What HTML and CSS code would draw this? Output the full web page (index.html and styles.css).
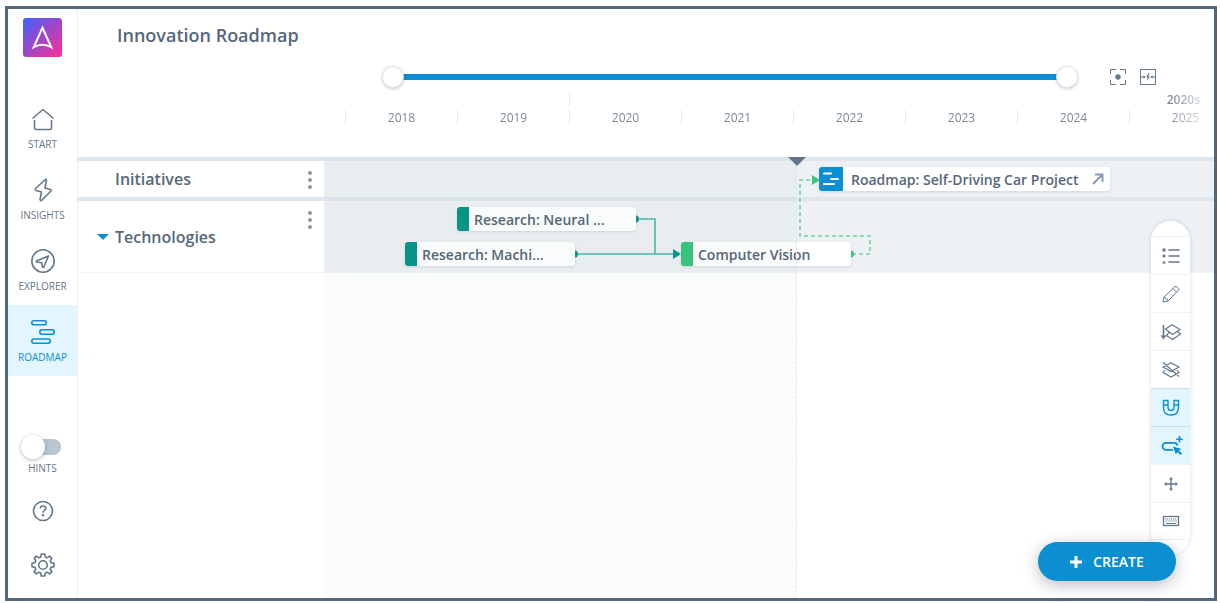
FILE: index.html
```html
<!DOCTYPE html>
<html lang="en">
<head>
    <meta charset="UTF-8">
    <meta name="viewport" content="width=device-width, initial-scale=1.0">
    <title>Innovation Roadmap</title>
    <link rel="stylesheet" href="styles.css">
</head>
<body>
    <div class="app">
        <nav class="sidebar">
            <a class="logo" href="#" aria-label="Home">
                <svg viewBox="0 0 40 40" width="39" height="39">
                    <path d="M20 10 L29 30 Q20 25 11 30 Z" fill="none" stroke="#fff" stroke-width="2" stroke-linejoin="miter"/>
                </svg>
            </a>
            <a class="nav-item" href="#">
                <svg viewBox="0 0 24 24" width="24" height="24">
                    <path d="M1.500 11.500 L12 2.500 L22.500 11.500 M3.500 13 V21 Q3.500 22.500 5 22.500 H19 Q20.500 22.500 20.500 21 V13"/>
                </svg>
                <span>START</span>
            </a>
            <a class="nav-item" href="#">
                <svg viewBox="0 0 24 24" width="24" height="24">
                    <path d="M15 1 L4.500 10.500 Q4 12 5 12.500 L10.500 14 L9 21.500 Q9.500 23 10.500 22.500 L20 13 Q20.500 12 19.500 11.500 L14 10 L15.500 2 Z"/>
                </svg>
                <span>INSIGHTS</span>
            </a>
            <a class="nav-item" href="#">
                <svg viewBox="0 0 24 24" width="24" height="24">
                    <circle cx="12" cy="12" r="11.200"/>
                    <path d="M17.500 7 L5.500 12 Q5 13 6 13.300 L10.500 13.500 L11.500 18 Q12 19 12.800 18 Z"/>
                </svg>
                <span>EXPLORER</span>
            </a>
            <a class="nav-item active" href="#">
                <svg viewBox="0 0 24 24" width="24" height="24">
                    <rect x="0.800" y="0.800" width="14.500" height="4" rx="2"/>
                    <rect x="8.800" y="9.700" width="14.400" height="4.600" rx="2.300"/>
                    <rect x="0.800" y="19" width="18.500" height="4.200" rx="2.100"/>
                </svg>
                <span>ROADMAP</span>
            </a>
            <div class="nav-bottom">
                <label class="hints">
                    <input type="checkbox" class="switch">
                    <span>HINTS</span>
                </label>
                <button class="icon-button" aria-label="Help">
                    <svg viewBox="0 0 24 24" width="24" height="24">
                        <circle cx="12" cy="12" r="9.500"/>
                        <path d="M9.300 9.600 Q9.300 7 12 7 Q14.800 7 14.800 9.300 Q14.800 10.700 13.200 11.600 Q12 12.300 12 13.800"/>
                        <circle cx="12" cy="16.300" r="0.500"/>
                    </svg>
                </button>
                <button class="icon-button" aria-label="Settings">
                    <svg viewBox="0 0 24 24" width="24" height="24">
                        <circle cx="12" cy="12" r="4.300"/>
                        <path d="M10.300 1 H13.700 L14.400 4 L16.200 4.800 L18.700 3.100 L20.900 5.300 L19.200 7.800 L20 9.600 L23 10.300 V13.700 L20 14.400 L19.200 16.200 L20.900 18.700 L18.700 20.900 L16.200 19.200 L14.400 20 L13.700 23 H10.300 L9.600 20 L7.800 19.200 L5.300 20.900 L3.100 18.700 L4.800 16.200 L4 14.400 L1 13.700 V10.300 L4 9.600 L4.800 7.800 L3.100 5.300 L5.300 3.100 L7.800 4.800 L9.600 4 Z"/>
                    </svg>
                </button>
            </div>
        </nav>

        <main class="content">
            <header class="header">
                <h1>Innovation Roadmap</h1>
                <div class="range-row">
                    <div class="range">
                        <input type="range" min="0" max="100" value="0" aria-label="From">
                        <input type="range" min="0" max="100" value="100" aria-label="To">
                    </div>
                    <button class="range-button" aria-label="Fit to screen">
                        <svg viewBox="0 0 16 16" width="16" height="16">
                            <path d="M0.500 5 V0.500 H6 M10 0.500 H15.500 V5 M15.500 11 V15.500 H10 M6 15.500 H0.500 V11"/>
                            <circle cx="8" cy="8" r="2.700" fill="currentColor" stroke="none"/>
                        </svg>
                    </button>
                    <button class="range-button" aria-label="Go to today">
                        <svg viewBox="0 0 16 16" width="16" height="16">
                            <rect x="0.500" y="0.500" width="15" height="15"/>
                            <path d="M1 8 H4 M12 8 H15"/>
                            <path d="M3.500 6.300 L5.700 8 L3.500 9.700 Z M12.500 6.300 L10.300 8 L12.500 9.700 Z M8.500 4 L6.200 8.300 H7.600 L7.200 12 L9.800 7.400 H8.400 L9.500 4 Z" fill="currentColor" stroke="none"/>
                        </svg>
                    </button>
                </div>
                <div class="scale">
                    <div class="decades">
                        <span class="decade">2020s</span>
                    </div>
                    <div class="years">
                        <span>2018</span>
                        <span>2019</span>
                        <span>2020</span>
                        <span>2021</span>
                        <span>2022</span>
                        <span>2023</span>
                        <span>2024</span>
                        <span>2025</span>
                    </div>
                </div>
            </header>

            <section class="board">
                <div class="lane">
                    <div class="lane-label">
                        <h2>Initiatives</h2>
                        <button class="more" aria-label="Initiatives menu"><i></i><i></i><i></i></button>
                    </div>
                    <div class="track">
                        <a class="bar link" href="#" style="left: 495px; width: 291px">
                            <svg class="bar-icon" viewBox="0 0 24 24" width="24" height="24">
                                <path d="M5 6.500 H12 M12 12 H19 M5 17 H15"/>
                            </svg>
                            <span>Roadmap: Self-Driving Car Project</span>
                            <svg class="open" viewBox="0 0 12 12" width="12" height="12">
                                <path d="M1 11 L10 2 M3 1.500 H10.500 V9"/>
                            </svg>
                        </a>
                    </div>
                </div>
                <div class="lane tall">
                    <div class="lane-label">
                        <button class="toggle" aria-label="Collapse Technologies"></button>
                        <h2>Technologies</h2>
                        <button class="more" aria-label="Technologies menu"><i></i><i></i><i></i></button>
                    </div>
                    <div class="track">
                        <div class="bar research" style="left: 133px; width: 179px"><span>Research: Neural ...</span></div>
                        <div class="bar research second" style="left: 81px; width: 170px"><span>Research: Machi...</span></div>
                        <div class="bar tech second" style="left: 357px; width: 170px"><span>Computer Vision</span></div>
                    </div>
                </div>
                <div class="rest"></div>
                <div class="past"></div>
                <div class="now"></div>
                <svg class="links" viewBox="0 0 890 120" width="890" height="120">
                    <g stroke="#4db3a7" stroke-width="1.600" fill="none">
                        <path d="M313 62 H331 V97 M252 97 H350"/>
                    </g>
                    <g fill="#0a9688">
                        <path d="M312 58.500 a3 3.500 0 0 1 0 7 Z M251 93.500 a3 3.500 0 0 1 0 7 Z M349 92 L357 97 L349 102 Z"/>
                    </g>
                    <path d="M528 97 H546 V79 H476 V23 H488" stroke="#6fd29c" stroke-width="1.600" fill="none" stroke-dasharray="4 3"/>
                    <path d="M527 93.500 a3 3.500 0 0 1 0 7 Z M488 18 L496 23 L488 28 Z" fill="#3ac47d"/>
                </svg>
            </section>

            <div class="toolbar">
                <button aria-label="Legend">
                    <svg viewBox="0 0 20 20" width="20" height="20">
                        <path d="M7.500 4 H18.500 M7.500 10 H18.500 M7.500 16 H18.500" stroke-width="1.700"/>
                        <path d="M1.500 2.500 h3 v3 h-3 Z M3 8.500 a1.500 1.500 0 1 1 0 3 a1.500 1.500 0 1 1 0 -3 Z M3 14.500 L4.800 17.500 H1.200 Z" fill="currentColor" stroke="none"/>
                    </svg>
                </button>
                <button aria-label="Edit">
                    <svg viewBox="0 0 20 20" width="20" height="20">
                        <path d="M2 18 L3 13 L14 2.600 Q15 1.800 16 2.800 L17.500 4.300 Q18.400 5.300 17.500 6.200 L7 17 Z M12 4.500 L15.500 8.200 M3 13 Q5 13 5 15 Q7 15 7 17"/>
                    </svg>
                </button>
                <button aria-label="Sort layers">
                    <svg viewBox="0 0 20 20" width="20" height="20">
                        <path d="M2.500 3 V14" stroke-width="1.600"/>
                        <path d="M-0.500 13.500 H5.500 L2.500 17.500 Z" fill="currentColor" stroke="none"/>
                        <path d="M4.500 7 L11 2.800 L19 7.500 L11.500 12.500 Z M16.500 9.500 L19.500 12 L11.500 17.500 L5.500 13.500 L8 10.500" stroke-width="1.200"/>
                    </svg>
                </button>
                <button aria-label="Hide layers">
                    <svg viewBox="0 0 20 20" width="20" height="20">
                        <path d="M2 7 L10 3 L18 7 L10 11.500 Z M4 10 L2 12.500 L10 17 L18 12.500 L16 10 M2 2.500 L18 16.500" stroke-width="1.200"/>
                    </svg>
                </button>
                <button class="on" aria-label="Snap">
                    <svg viewBox="0 0 20 20" width="20" height="20">
                        <path d="M2.500 2.500 H7 V9 Q7 12.500 10 12.500 Q13 12.500 13 9 V2.500 H17.500 V9.500 Q17.500 17 10 17 Q2.500 17 2.500 9.500 Z M2.500 7 H7 M13 7 H17.500" stroke-width="1.400"/>
                    </svg>
                </button>
                <button class="on" aria-label="Quick add">
                    <svg viewBox="0 0 20 20" width="20" height="20">
                        <path d="M12 13.800 H5 a3.500 3.500 0 0 1 0 -7 H13 Q16 6.800 16.500 9.500" stroke-width="1.800"/>
                        <path d="M18.500 0 V6.500 M15.300 3.200 H21.700" stroke-width="1.600"/>
                        <path d="M12 10.500 L20.500 13 L17.800 14.500 L21 17.500 L19.500 19 L16.500 16 L14.800 18.500 Z" fill="currentColor" stroke="none"/>
                    </svg>
                </button>
                <button aria-label="Move">
                    <svg viewBox="0 0 20 20" width="20" height="20">
                        <path d="M10 4 V16 M4 10 H16" stroke-width="1.400"/>
                        <path d="M10 3 L12 5.500 H8 Z M10 17 L12 14.500 H8 Z M3 10 L5.500 8 V12 Z M17 10 L14.500 8 V12 Z" fill="currentColor" stroke="none"/>
                    </svg>
                </button>
                <button aria-label="Keyboard shortcuts">
                    <svg viewBox="0 0 20 20" width="20" height="20">
                        <rect x="2.500" y="5.500" width="15" height="9" stroke-width="1.300"/>
                        <path d="M4 8 H16 M4.500 10 H16" stroke-dasharray="1.200 0.800"/>
                        <path d="M5 12.500 H15"/>
                    </svg>
                </button>
            </div>

            <button class="create">
                <svg viewBox="0 0 12 12" width="12" height="12">
                    <path d="M6 0 V12 M0 6 H12"/>
                </svg>
                CREATE
            </button>
        </main>
    </div>
</body>
</html>
```
FILE: styles.css
```css
* {
    box-sizing: border-box;
}
body {
    margin: 0;
    padding: 6px 3px 2px 5px;
    height: 100vh;
    font-family: "Open Sans", "Noto Sans", sans-serif;
    color: #56677a;
    background: #fff;
}
.app {
    display: flex;
    height: 100%;
    border: 3px solid #54687a;
}
button {
    padding: 0;
    border: none;
    background: none;
    color: inherit;
    font: inherit;
    cursor: pointer;
}
a {
    color: inherit;
    text-decoration: none;
}
svg {
    display: block;
    fill: none;
    stroke: currentColor;
    overflow: visible;
}
h1, h2 {
    margin: 0;
    font-weight: 550;
}

/* Sidebar */
.sidebar {
    display: flex;
    flex-direction: column;
    align-items: center;
    flex: none;
    width: 70px;
    border-right: 1px solid #eef1f3;
    color: #64788c;
}
.logo {
    margin: 9px 0 35px;
    border-radius: 3px;
    background: linear-gradient(135deg, #3d63ff 0%, #a146c8 50%, #ff2e93 100%);
}
.nav-item {
    display: flex;
    flex-direction: column;
    align-items: center;
    gap: 5px;
    width: 100%;
    height: 71px;
    padding-top: 15px;
    font-size: 10px;
    font-weight: 500;
    line-height: 16px;
}
.nav-item svg,
.icon-button svg {
    stroke-width: 1.6;
    stroke-linejoin: round;
}
.nav-item.active {
    background: #e3f5ff;
    color: #0b8fd2;
}
.nav-bottom {
    display: flex;
    flex-direction: column;
    align-items: center;
    gap: 22px;
    margin-top: auto;
    padding-bottom: 17px;
}
.hints {
    display: flex;
    flex-direction: column;
    align-items: center;
    gap: 5px;
    margin-bottom: -3px;
    font-size: 10px;
    font-weight: 500;
    line-height: 16px;
}
.switch {
    appearance: none;
    position: relative;
    width: 36px;
    height: 16px;
    margin: 0;
    border-radius: 8px;
    background: #b9c6d2;
}
.switch::before {
    content: '';
    position: absolute;
    top: -4px;
    left: -4px;
    width: 24px;
    height: 24px;
    border-radius: 50%;
    background: #fff;
    box-shadow: 0 1px 4px rgba(60, 80, 110, 0.4);
}
.icon-button {
    padding: 4px;
}

/* Header */
.content {
    position: relative;
    display: flex;
    flex-direction: column;
    flex: 1;
    min-width: 0;
}
.header {
    height: 148px;
    padding-top: 14px;
    overflow: hidden;
}
.header h1 {
    padding-left: 39px;
    font-size: 18px;
    line-height: 24px;
}
.range-row {
    display: flex;
    align-items: center;
    gap: 14px;
    margin-top: 18px;
    padding: 0 58px 0 304px;
    height: 24px;
}
.range {
    display: grid;
    align-items: center;
    flex: 1;
    margin-right: 18px;
    background: linear-gradient(#0b8fd2, #0b8fd2) center / calc(100% - 22px) 6px no-repeat;
}
.range input {
    grid-area: 1 / 1;
    appearance: none;
    width: 100%;
    height: 22px;
    margin: 0;
    background: none;
    pointer-events: none;
}
.range input::-webkit-slider-thumb {
    appearance: none;
    width: 22px;
    height: 22px;
    border: 1px solid #e2e6ee;
    border-radius: 50%;
    background: #fff;
    box-shadow: 0 1px 3px rgba(60, 80, 120, 0.3);
    pointer-events: auto;
}
.range-button {
    color: #64788c;
}
.scale {
    padding-left: 267px;
    font-size: 12px;
    color: #7c8b98;
    mask-image: linear-gradient(to right, #000 calc(100% - 45px), transparent);
}
.decades,
.years {
    display: grid;
    grid-template-columns: repeat(8, 112px);
}
.decades {
    height: 14px;
    margin: 4px 0 3px;
    line-height: 14px;
}
.decade {
    grid-column: 3 / -1;
    padding-right: 41px;
    border-left: 1px solid #e9edf0;
    font-weight: 600;
    text-align: right;
}
.years span {
    border-left: 1px solid #e9edf0;
    line-height: 15px;
    text-align: center;
}

/* Board */
.board {
    position: relative;
    display: flex;
    flex-direction: column;
    flex: 1;
    overflow: hidden;
}
.lane {
    display: flex;
    height: 40px;
    border-top: 4px solid #dfe6ed;
}
.lane.tall {
    height: 76px;
    border-bottom: 1px solid #f0f3f5;
}
.lane-label {
    display: flex;
    align-items: center;
    position: relative;
    flex: none;
    width: 246px;
    padding-left: 37px;
}
.lane-label h2 {
    font-size: 16px;
    line-height: 20px;
}
.toggle {
    position: absolute;
    left: 19px;
    border: 6px solid transparent;
    border-top-color: #0b8fd2;
    border-bottom: none;
}
.more {
    display: flex;
    flex-direction: column;
    align-self: flex-start;
    gap: 3px;
    margin: 10px 12px 0 auto;
}
.more i {
    width: 4px;
    height: 4px;
    border-radius: 50%;
    background: #8b9bac;
}
.track {
    position: relative;
    flex: 1;
    background: #edf1f4;
}
.bar {
    position: absolute;
    top: 6px;
    display: flex;
    align-items: center;
    height: 24px;
    border-radius: 3px;
    background: #fff;
    box-shadow: 0 1px 3px rgba(60, 80, 100, 0.16);
    font-size: 14px;
    font-weight: 550;
    white-space: nowrap;
    overflow: hidden;
}
.bar.second {
    top: 41px;
}
.bar::before {
    content: '';
    align-self: stretch;
    width: 12px;
    margin-right: 5px;
}
.bar.research::before {
    background: #0a9688;
}
.bar.tech::before {
    background: #3ac47d;
}
.bar.link::before {
    display: none;
}
.bar-icon {
    margin-right: 8px;
    background: #0b8fd2;
    color: #fff;
    stroke-width: 2;
    stroke-linecap: round;
}
.open {
    margin: 0 6px 0 auto;
    color: #8a9bac;
    stroke-width: 2;
}
.rest {
    flex: 1;
}
.past {
    position: absolute;
    top: 0;
    bottom: 0;
    left: 246px;
    width: 473px;
    border-right: 1px dashed #e3e7ea;
    background: rgba(0, 80, 40, 0.018);
    pointer-events: none;
}
.now {
    position: absolute;
    top: 0;
    left: 710px;
    border: 9px solid transparent;
    border-top-color: #64748b;
    border-bottom: none;
}
.links {
    position: absolute;
    top: 0;
    left: 246px;
    stroke: none;
    pointer-events: none;
}

/* Floating tools */
.toolbar {
    position: absolute;
    right: 24px;
    bottom: 43px;
    display: flex;
    flex-direction: column;
    width: 39px;
    padding: 15px 0;
    border-radius: 20px;
    background: #fff;
    box-shadow: 0 0 4px rgba(60, 80, 100, 0.2);
    color: #64788c;
}
.toolbar button {
    display: flex;
    align-items: center;
    justify-content: center;
    height: 38px;
    border-top: 1px solid #edf1f4;
}
.toolbar button:last-child {
    border-bottom: 1px solid #edf1f4;
}
.toolbar .on {
    border-color: #cfdde7;
    background: #e3f5ff;
    color: #0b8fd2;
}
.create {
    position: absolute;
    right: 38px;
    bottom: 17px;
    display: flex;
    align-items: center;
    justify-content: center;
    gap: 11px;
    width: 138px;
    height: 39px;
    border-radius: 20px;
    background: #0b8fd2;
    box-shadow: 0 4px 16px rgba(60, 70, 90, 0.35);
    color: #fff;
    font-size: 14px;
    font-weight: 600;
}
.create svg {
    stroke-width: 3;
}
```
